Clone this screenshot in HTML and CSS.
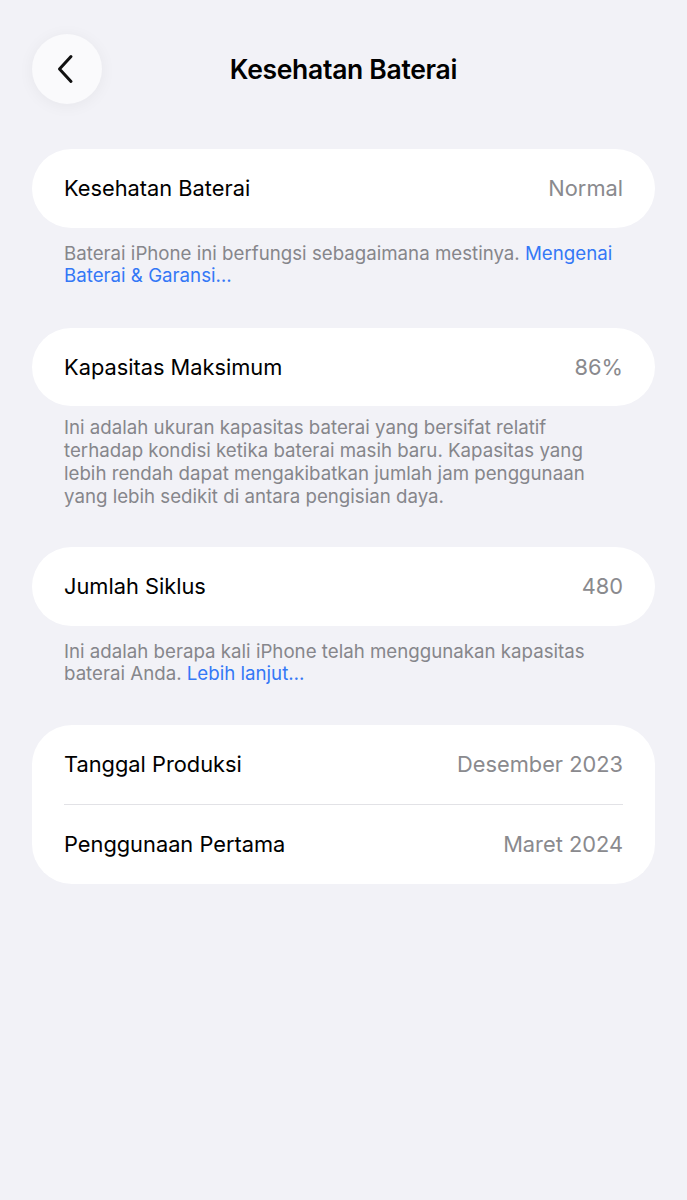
FILE: index.html
```html
<!DOCTYPE html>
<html lang="id">
<head>
<meta charset="utf-8">
<link rel="stylesheet" href="styles.css">
</head>
<body>
<div class="page">
  <header class="nav">
    <div class="back">
      <svg width="20" height="30" viewBox="0 0 20 30"><path d="M15 2.5 L3.5 15 L15 27.5" fill="none" stroke="#111" stroke-width="3" stroke-linecap="round" stroke-linejoin="round"/></svg>
    </div>
    <h1 class="title">Kesehatan Baterai</h1>
  </header>

  <section class="group">
    <div class="card">
      <div class="row"><span class="label">Kesehatan Baterai</span><span class="value">Normal</span></div>
    </div>
    <p class="foot">
      <span class="line">Baterai iPhone ini berfungsi sebagaimana mestinya. <span class="link">Mengenai</span></span>
      <span class="line"><span class="link">Baterai &amp; Garansi…</span></span>
    </p>
  </section>

  <section class="group">
    <div class="card">
      <div class="row"><span class="label">Kapasitas Maksimum</span><span class="value">86%</span></div>
    </div>
    <p class="foot tight">
      <span class="line">Ini adalah ukuran kapasitas baterai yang bersifat relatif</span>
      <span class="line">terhadap kondisi ketika baterai masih baru. Kapasitas yang</span>
      <span class="line">lebih rendah dapat mengakibatkan jumlah jam penggunaan</span>
      <span class="line">yang lebih sedikit di antara pengisian daya.</span>
    </p>
  </section>

  <section class="group">
    <div class="card">
      <div class="row"><span class="label">Jumlah Siklus</span><span class="value">480</span></div>
    </div>
    <p class="foot">
      <span class="line">Ini adalah berapa kali iPhone telah menggunakan kapasitas</span>
      <span class="line">baterai Anda. <span class="link">Lebih lanjut…</span></span>
    </p>
  </section>

  <section class="group">
    <div class="card">
      <div class="row"><span class="label">Tanggal Produksi</span><span class="value">Desember 2023</span></div>
      <div class="divider"></div>
      <div class="row"><span class="label">Penggunaan Pertama</span><span class="value">Maret 2024</span></div>
    </div>
  </section>
</div>
</body>
</html>
```

FILE: styles.css
```css
* { box-sizing: border-box; }
html, body { margin: 0; padding: 0; }
body {
  background: #f2f2f7;
  font-family: Inter, "Noto Sans", sans-serif;
  color: #000;
  width: 687px;
  height: 1200px;
}
.page {
  padding: 34px 32px 0 32px;
}
.nav {
  display: flex;
  align-items: center;
  height: 70px;
  margin-bottom: 45px;
}
.back {
  width: 70px;
  height: 70px;
  border-radius: 50%;
  background: #fafafc;
  box-shadow: 0 2px 16px rgba(0,0,0,0.05);
  display: flex;
  align-items: center;
  justify-content: center;
  padding-right: 3px;
}
.title {
  flex: 1;
  margin: 0 70px 0 0;
  text-align: center;
  font-size: 26.5px;
  font-weight: 600;
  letter-spacing: -0.3px;
}
.group { margin-bottom: 39px; }
.group:first-of-type { margin-bottom: 40px; }
.card {
  background: #fff;
  border-radius: 40px;
  padding: 0 32px;
}
.row {
  display: flex;
  justify-content: space-between;
  align-items: center;
  height: 78.5px;
  font-size: 21.8px;
}
.value { color: #8a8a8e; }
.divider {
  height: 1.5px;
  background: #e2e2e6;
}
.foot {
  margin: 0;
  padding: 15px 20px 0 32px;
  font-size: 18.7px;
  line-height: 22.7px;
  color: #86868b;
}
.foot .line {
  display: block;
  white-space: nowrap;
}
.foot.tight { padding-top: 11px; }
.link { color: #3478f6; }
```
